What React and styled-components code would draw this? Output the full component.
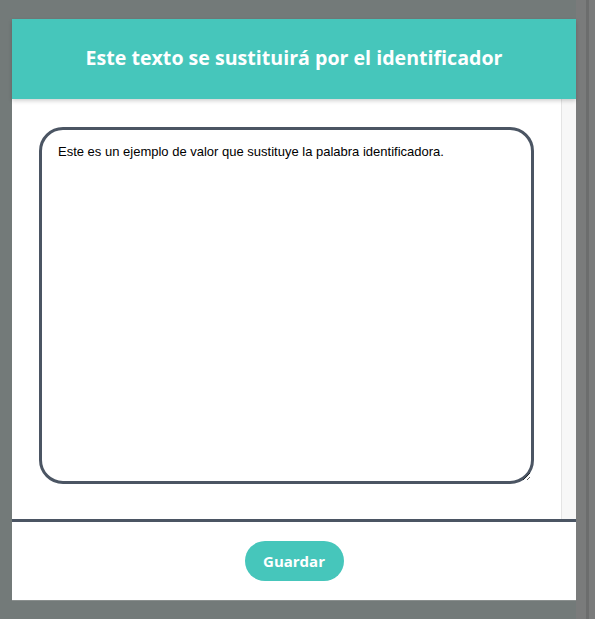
import React from "react";
import styled, { createGlobalStyle } from "styled-components";

const GlobalStyle = createGlobalStyle`
  html, body {
    margin: 0;
    padding: 0;
    background: #737a79;
  }
  * {
    box-sizing: border-box;
  }
`;

const Page = styled.div`
  display: flex;
  height: 619px;
  padding: 19px 0 0 12px;
  overflow: hidden;
`;

const Modal = styled.div`
  display: flex;
  flex-direction: column;
  width: 564px;
  height: 582px;
  background: #fff;
  border-bottom: 1px solid #8a8f8e;
`;

const Gutter = styled.div`
  flex: 1;
  display: flex;
  margin-top: -19px;
  background: #7a7b7b;
`;

const GutterLine = styled.div`
  width: 3px;
  margin-left: 10px;
  background: #6c6d6d;
`;

const Header = styled.div`
  display: flex;
  align-items: center;
  justify-content: center;
  height: 80px;
  padding-bottom: 3px;
  background: #46c6bb;
  color: #fff;
  font-family: "Open Sans", sans-serif;
  font-weight: 700;
  font-size: 19.6px;
  box-shadow: 0 2px 4px rgba(0, 0, 0, 0.18);
  position: relative;
  z-index: 1;
`;

const Body = styled.div`
  display: flex;
  height: 420px;
`;

const Content = styled.div`
  flex: 1;
  padding: 28px 0 35px 27px;
`;

const ScrollTrack = styled.div`
  width: 15px;
  background: #f7f7f7;
  border-left: 1px solid #e4e4e4;
`;

const TextArea = styled.textarea`
  display: block;
  width: 495px;
  height: 357px;
  border: 3px solid #4b5563;
  border-radius: 24px;
  padding: 14px 16px;
  font-family: "Liberation Sans", Arial, sans-serif;
  font-size: 13px;
  color: #000;
  resize: vertical;
  outline: none;
`;

const Divider = styled.div`
  height: 3px;
  background: #4b5563;
`;

const Footer = styled.div`
  flex: 1;
  display: flex;
  justify-content: center;
  padding-top: 19px;
`;

const Button = styled.button`
  width: 99px;
  height: 40px;
  border: none;
  border-radius: 20px;
  background: #46c6bb;
  color: #fff;
  font-family: "Open Sans", sans-serif;
  font-weight: 700;
  font-size: 15px;
  cursor: pointer;
`;

const App = () => {
  return (
    <>
      <GlobalStyle />
      <Page>
        <Modal>
          <Header>Este texto se sustituirá por el identificador</Header>
          <Body>
            <Content>
              <TextArea defaultValue="Este es un ejemplo de valor que sustituye la palabra identificadora." />
            </Content>
            <ScrollTrack />
          </Body>
          <Divider />
          <Footer>
            <Button>Guardar</Button>
          </Footer>
        </Modal>
        <Gutter>
          <GutterLine />
        </Gutter>
      </Page>
    </>
  );
};

export default App;
